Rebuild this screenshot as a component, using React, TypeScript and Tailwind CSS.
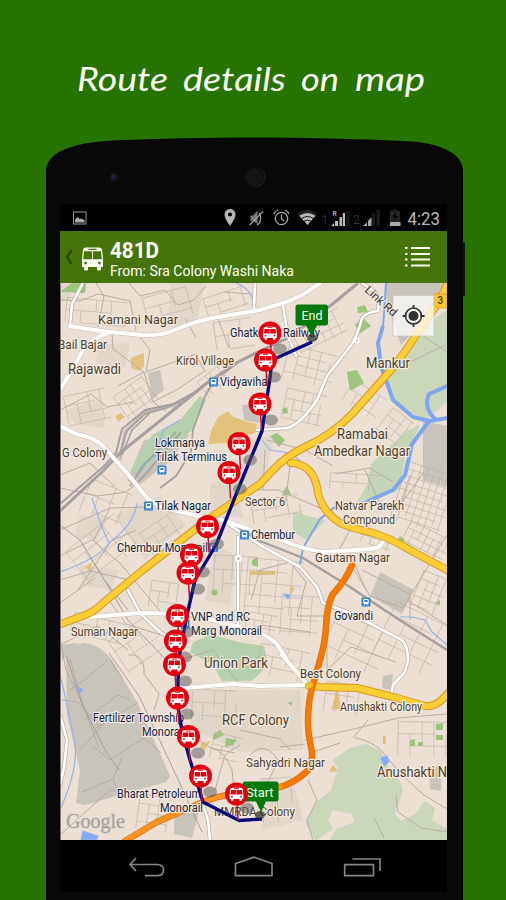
import React from "react";

const STOPS: [number, number, number, number][] = [
  [270, 333, 280, 349], [265.5, 360, 274, 377], [260, 404, 271, 420], [239, 443.5, 250, 460], [229, 472.5, 240, 489],
  [207.5, 526.5, 217, 544], [191.5, 555, 203, 572], [188, 573, 198, 589], [177.5, 615.5, 187, 632], [175.5, 641, 185, 657],
  [174.5, 664.5, 185, 681], [177.5, 698, 187, 714], [188.5, 736.5, 198, 753], [200.5, 776, 210, 792], [236.5, 794, 247, 808],
];

// Neighbourhood street grids: x, y, width, height, rotation, column step, row step.
const GRIDS: number[][] = [
  [118, 384, 36, 28, -36, 7, 8], [398, 468, 52, 60, 18, 7, 7], [404, 530, 46, 22, 26, 7, 7],
  [294, 318, 52, 26, -26, 9, 8], [285, 350, 50, 34, 14, 11, 9], [284, 392, 40, 30, 12, 9, 10],
  [66, 300, 60, 24, 5, 15, 12], [66, 392, 42, 30, -12, 12, 10], [145, 292, 45, 28, -15, 15, 11],
  [205, 292, 42, 20, -18, 13, 9], [215, 320, 38, 28, -8, 13, 14], [72, 528, 62, 42, -38, 15, 12],
  [84, 486, 44, 34, 22, 13, 15], [144, 520, 40, 28, -34, 11, 9], [150, 582, 28, 26, 8, 9, 10],
  [214, 556, 42, 38, 3, 9, 14], [246, 560, 55, 54, 5, 15, 12], [246, 614, 30, 22, 10, 8, 7],
  [252, 498, 48, 22, -10, 12, 9], [281, 596, 38, 40, 4, 10, 12], [72, 618, 52, 20, 14, 12, 10],
  [115, 626, 44, 38, -34, 15, 12], [192, 690, 44, 32, 3, 11, 13], [258, 648, 50, 30, 12, 14, 11],
  [327, 622, 60, 44, 25, 16, 12], [325, 684, 40, 30, 8, 11, 12],
  [398, 722, 50, 34, 1, 12, 12], [382, 612, 60, 55, 26, 17, 14], [380, 412, 26, 34, 38, 8, 9],
  [345, 388, 38, 24, 32, 10, 10], [138, 796, 30, 34, 8, 10, 9], [262, 778, 30, 44, -4, 15, 17],
  [330, 474, 50, 16, 4, 13, 9], [200, 370, 32, 20, -38, 5, 12], [416, 574, 28, 38, 22, 8, 9],
  [212, 735, 28, 26, 14, 10, 12], [362, 532, 30, 14, 18, 9, 7],
];

const gridPath = (g: number[]) => {
  const [, , w, h, , sx, sy] = g;
  let d = "";
  for (let x = 0, i = 0; x <= w; x += sx, i++) d += `M${x} ${i % 3 === 1 ? sy : 0}V${i % 4 === 2 ? h - sy : h}`;
  for (let y = 0, i = 0; y <= h; y += sy, i++) d += `M${i % 3 === 2 ? sx : 0} ${y}H${i % 3 === 1 ? w - sx : w}`;
  return d;
};

type L = [string, number, number, number, number, string?];
const PLACE = "#4d3f2c";
const STATION = "#14233f";
const LABELS: L[] = [
  ["Kamani Nagar", 98, 324, 80, 13.5], ["Bail Bajar", 58, 349, 49, 13], ["Rajawadi", 68, 374, 53, 14],
  ["Kirol Village", 176, 365, 58, 12], ["G Colony", 62, 457, 45, 12.5], ["Mankur", 366, 368, 44, 14],
  ["Ramabai", 337, 439, 51, 14], ["Ambedkar Nagar", 314, 456, 96, 14], ["Sector 6", 245, 506, 40, 12],
  ["Natvar Parekh", 335, 510, 69, 12], ["Compound", 343, 524, 52, 12], ["Gautam Nagar", 315, 562, 75, 13],
  ["Suman Nagar", 71, 636, 67, 12.5], ["Union Park", 204, 668, 64, 14], ["Best Colony", 300, 678, 61, 12.5],
  ["Anushakti Colony", 340, 711, 82, 12], ["RCF Colony", 222, 725, 67, 14], ["Sahyadri Nagar", 246, 767, 79, 12.5],
  ["Anushakti N", 377, 777, 70, 14], ["MMRDA Colony", 214, 816, 81, 12.5],
  ["Ghatkopar Railway", 230, 337, 90, 12, STATION], ["Vidyavihar", 220, 386, 51, 12.5, STATION],
  ["Lokmanya", 155, 447, 50, 12.5, STATION], ["Tilak Terminus", 155, 461, 72, 12.5, STATION],
  ["Tilak Nagar", 155, 510, 56, 12.5, STATION], ["Chembur", 251, 539, 44, 12.5, STATION],
  ["Chembur Monorail", 117, 552, 91, 12.5, STATION], ["Govandi", 334, 620, 39, 12.5, STATION],
  ["VNP and RC", 191, 621, 59, 12.5, STATION], ["Marg Monorail", 191, 635, 71, 12.5, STATION],
  ["Fertilizer Township", 93, 722, 91, 12.5, STATION], ["Monorail", 142, 736, 43, 12.5, STATION],
  ["Bharat Petroleum", 117, 798, 84, 12.5, STATION], ["Monorail", 160, 812, 43, 12.5, STATION],
];

const WHITE = [
  "M70 326Q92 330 110 332L142 335Q160 336 172 331Q198 320 218 317L260 310L283 303Q300 298 314 287L320 283",
  "M110 332Q92 338 83 350L73 368L60 390",
  "M60 426L76 434Q94 437 103 446L127 473L147 498L160 507L203 517L222 520L260 533L282 540Q304 550 325 552L370 549Q379 549 383 542",
  "M286 658L276 643Q264 633 250 630L190 614L140 613L90 617",
  "M183 688L233 684L260 686L308 685L282 655",
];
const WHITE_THIN = [
  "M70 326L72 304L83 283", "M255 283L254 310", "M283 306L288 336L296 356",
  "M257 430L287 428Q300 425 317 400L327 376L352 344Q358 334 362 318Q367 312 378 311Q380 302 375 292L362 283",
  "M260 545L300 567L317 587L323 603L350 613L377 627L402 640Q408 646 408 660L405 672L393 685L391 697",
  "M238 537L238 627", "M222 520L260 545", "M128 590L140 613L160 632L176 642",
  "M202 802L208 820L210 840", "M60 715L67 740L64 768L60 785",
];
const MINOR =
  "M60 300L80 301L98 294L130 301M96 283L104 296L98 327M130 301L136 330M129 283L140 296L165 290L178 305L194 300L206 286M140 337L150 350L146 372L196 354L204 370M112 334L113 349L144 372L153 402L166 411M144 372L118 386M153 402L178 389L206 370M224 292L250 294M185 318L196 338M217 316L229 348M60 410L91 394L107 407L133 402M60 475L90 463L115 487M60 488L98 496L126 492L150 472M60 530L110 508L150 507M60 556L92 540L120 563L144 592L174 628M110 508L94 540M60 580L90 571L130 580M78 590L111 541L136 530M60 603L95 578M109 600L126 624L177 640M60 645L98 626L128 650M128 655Q145 653 144 674L159 694L154 710M180 660L213 650L240 685M260 625L310 632M251 600L260 570L290 562L306 582L297 616L324 616M327 620L327 670L351 647L396 662M353 568L370 596L403 608L439 548M439 548L447 535M350 553L366 590M362 570L410 594L410 620M350 530L338 552M365 470L382 508L402 503L424 472M335 474L370 468L393 482M305 740L358 728L398 718L447 714M355 738Q370 740 382 751L401 774L424 795L447 809M353 738L368 720M310 753L340 743M308 780L317 800L307 820L313 840M396 795L398 812L421 828L447 832M374 818L384 838M190 735L211 748Q224 750 232 770L234 790M210 748L235 753M250 755Q265 740 278 760L268 782M280 747L305 744M240 730L280 739L290 750M60 835L110 790L135 795M215 790L225 755L240 745M267 440L305 450L333 466M410 475L398 512M265 450L263 490M290 466L285 505M242 490L278 490L320 508M60 638L66 670L82 702M62 700L78 702L100 728M407 600L447 625M390 372L445 345M400 320L447 352";

function Bus({ x, y, s = 1, sy = s, color = "#fff", hole = "#e3000f" }: { x: number; y: number; s?: number; sy?: number; color?: string; hole?: string }) {
  return (
    <g transform={`translate(${x} ${y}) scale(${s} ${sy})`}>
      <path fill={color} d="M-6.5-4.6Q-6.3-6.5-4-6.5H4Q6.3-6.5 6.5-4.6L7 1V5H-7V1ZM-5.6 5H-3V6.7Q-4.3 7.4-5.6 6.7ZM3 5H5.6V6.7Q4.3 7.4 3 6.7Z" />
      <path fill={hole} d="M-5.6-4.200H-.3V.4H-6.200ZM.3-4.200H5.600L6.200 .4H.3ZM-2.7-5.800H2.7V-5H-2.7Z" />
      <circle cx="-4.6" cy="2.6" r=".9" fill={hole} /><circle cx="4.6" cy="2.6" r=".9" fill={hole} />
    </g>
  );
}

function StationIcon({ x, y }: { x: number; y: number }) {
  return (
    <g transform={`translate(${x} ${y})`}>
      <rect x="-4.5" y="-4.5" width="9" height="9" rx="1" fill="#3484cf" />
      <rect x="-2.7" y="-3" width="5.4" height="5" rx="1" fill="#fff" />
      <path fill="#3484cf" d="M-1.7-2h3.4v2h-3.4z" /><path stroke="#fff" strokeWidth=".8" d="M-2 3.4L-1 2M2 3.4L1 2" />
    </g>
  );
}

function CityMap() {
  const route = "M312 342L272 360L270 378L262 431L239 487L216 545L195 580L187 615L180 652L178 680L178 707L182 731L190 760L203 802L239 820.5L262 819";
  const orangeTop = "M352 565Q346 580 333 594Q327 604 326 627Q325 643 320 660L313 685Q308 700 308 722Q308 735 312 752Q313 767 305 773Q294 783 280 787";
  const orangeLow = "M280 787L227 795Q215 797 203 802L157 822Q142 831 125 841";
  return (
    <svg className="block h-[557px] w-[387px]" viewBox="60 283 387 557" fill="none" style={{ fontFamily: "Roboto, sans-serif" }}>
      <rect x="60" y="283" width="387" height="557" fill="#ecdfd4" />
      <g fill="#e0d6c9">
        <path d="M170 283L205 283L196 325L168 326ZM115 515L160 495L186 525L145 560ZM65 410L100 400L105 428L75 424ZM190 690L300 690L303 750L240 752L191 728ZM262 777L295 790L303 820L262 830ZM60 283H73L70 300H60ZM250 440L275 435L262 490L235 492ZM100 345L130 343L125 368L95 363ZM210 485L235 475L243 518L210 512ZM215 545L235 555L230 605L205 600ZM80 565L120 570L110 590L82 585ZM80 515L108 518L96 540L75 537Z" />
      </g>
      <g fill="#c9c4bb">
        <path d="M66 657Q72 644 84 643Q99 644 112 660L137 702L170 776L166 782L85 805L76 803L80 770L67 715Z" />
        <path d="M370 596L380 572L414 590L402 614ZM385 283H447L430 314L401 345L388 308ZM423 421L447 426V487L423 480ZM148 373L160 370L164 390L152 399ZM242 405L260 404V423L244 420ZM429 770L441 764V791L430 789ZM144 440L190 434L170 461L137 487L127 480Z" />
        <path d="M60 645L78 643L70 654L62 660ZM175 805L200 808L192 838L174 834ZM383 676L393 674L391 690L382 688Z" />
      </g>
      <g fill="#cad8b9">
        <path d="M447 310L420 328L391 367Q384 385 396 406L426 420L447 402Z" />
        <path d="M371 464L408 430L420 425L405 455L400 490L355 505L367 485ZM293 512L325 520L320 526L307 540L293 532Z" fill="#c5d6b8" />
        <path d="M305 822L316 802L331 790L338 768L333 760L350 748L366 744L381 751L389 770L400 781L403 791L395 814L401 821L415 814L425 801L435 808L432 820L447 829V840H315Z" />
      </g>
      <path fill="#ecdfd4" d="M317 840L333 829L328 820L333 810L352 814L354 822L336 829L330 840Z" />
      <path fill="#b5d0ac" d="M200 396L206 400L193 430L178 440L137 474L131 470L152 435L180 420ZM193 642L211 635L243 643L264 646L268 665L252 681L222 681L213 665L190 652Z" />
      <g fill="#9dc57b">
        <path d="M347 372L357 370L364 383L350 391ZM355 325L362 317L371 326L359 334ZM357 307L365 305L368 312L358 313ZM270 436L277 433L285 440L279 447ZM284 490L287 486L291 494L282 496ZM436 724L443 723V730H436ZM436 735H443V740H436ZM410 740L415 739V746H410ZM418 742H423V746H418ZM252 560L258 557V567L252 565ZM400 536L405 540L402 543L397 541ZM435 603L440 600V605ZM213 735L220 730L224 735L213 740ZM226 738L237 740L232 745L225 747ZM288 703L292 701V706ZM60 292L72 283H86L85 293ZM282 409L287 407L288 413L283 414Z" />
        <circle cx="214.500" cy="592.500" r="3" />
      </g>
      <g fill="#e3c37b">
        <path d="M131 358L144 353V366L139 371L131 368ZM115 416L121 413L125 417L118 422ZM211 431L218 417L228 411L232 416L244 421L257 424L255 433L236 438L226 443L208 444ZM85 567L92 562L91 572ZM201 743L211 741L204 750L200 748ZM250 571L275 571V575H250ZM338 690L341 709L331 710L334 700L336 689ZM333 765L338 771L329 772ZM383 736H386V744H383ZM290 586L295 588L291 595Z" />
      </g>
      <g stroke="#b8aea3" strokeWidth=".8">
        {GRIDS.map((g, i) => (
          <path key={i} d={gridPath(g)} transform={`translate(${g[0]} ${g[1]}) rotate(${g[4]} ${g[2] / 2} ${g[3] / 2})`} opacity=".7" />
        ))}
        <path d={MINOR} strokeWidth="1" strokeLinejoin="round" stroke="#b8aea3" />
        <path d="M70 690L87 678L108 660M84 720L118 695L130 700M93 746L110 760L144 738L161 753M80 750L115 712M82 792L113 779L122 800M70 659L82 702L99 748M110 660L122 678M113 779L122 757M96 728L137 703" stroke="#aba69e" />
        <path d="M66 655L82 704L105 750L119 770M109 653L139 696L175 773L202 832" stroke="#99958f" />
      </g>
      <g stroke="#93b3ee" strokeWidth="1.200">
        <path d="M60 572Q100 558 110 542Q134 525 137 503M92 498L101 525L109 543M60 675Q68 707 75 745Q78 770 60 810M236 283Q254 290 253 306M262 440L270 450L290 453L307 466M136 475L142 465L156 455L163 430L180 420M400 617H412L425 620L432 632L447 645" />
        <path fill="#83a9ee" d="M83 831L98 836L96 840H81ZM381 758L387 756L389 762L384 766ZM284 594L290 595L288 599ZM78 687L83 690L80 693Z" />
      </g>
      <path d="M386 283L385 299L383 326M368 501L349 507L335 507L320 519L303 548L300 564" stroke="#7fa6ef" strokeWidth="2" />
      <path d="M383 326L378 343L381 366L393 400L413 417L430 421L447 418M447 386L429 394Q423 408 436 420M429 421L412 444L405 475L393 490L368 501" stroke="#7fa6ef" strokeWidth="4" strokeLinejoin="round" />
      <g stroke="#a5a0a1" strokeLinejoin="round">
        <path d="M60 511L103 471L120 453L207 383L238 362L260 351L290 337L335 302L358 283" strokeWidth="3" />
        <path d="M60 504L103 467L116 453L122 429L145 410L178 403L203 387" strokeWidth="2" />
        <path d="M119 456L127 431L145 414L166 408L202 388M122 455L132 430L151 412M191 452L193 430L205 396L215 380L240 361M191 452L176 476L160 488M176 432L145 464L130 486M181 432L149 470L138 482" strokeWidth="1.700" />
        <path d="M223 518L260 541L303 558L350 587L398 619L447 650" strokeWidth="2.400" />
        <path d="M60 525L80 540L105 581L128 620L168 662M105 581L128 610" strokeWidth="1" />
        <path d="M120 460L125 432L145 412L176 405" strokeWidth="3" opacity=".6" />
      </g>
      <g strokeLinejoin="round" strokeLinecap="round">
        {WHITE.map((d) => <path key={d} d={d} stroke="#c9c0b6" strokeWidth="5" />)}
        {WHITE_THIN.map((d) => <path key={d} d={d} stroke="#b9b1a8" strokeWidth="4" />)}
        {WHITE.map((d) => <path key={d + "f"} d={d} stroke="#fff" strokeWidth="4" />)}
        {WHITE_THIN.map((d) => <path key={d + "f"} d={d} stroke="#fff" strokeWidth="2.600" />)}
        <circle cx="238.500" cy="558.500" r="2.500" stroke="#fff" strokeWidth="2" fill="#c9c0b6" />
        <circle cx="357" cy="340.500" r="2" stroke="#fff" strokeWidth="1.500" fill="#c9c0b6" />
        {[
          "M449 280Q441 300 430 315L397 363L353 413Q333 434 307 446Q286 456 273 470L260 484L207 520L143 570L103 603Q93 613 80 617L58 625",
          "M291 463Q312 464 317 487Q319 509 340 523Q350 528 370 532Q388 537 410 550L449 571",
          "M309 686L320 687L357 688L397 698L425 706Q437 708 449 692",
        ].map((d) => (
          <g key={d}><path d={d} stroke="#d79b25" strokeWidth="8" /><path d={d} stroke="#fdce35" strokeWidth="6" /></g>
        ))}
        <path d={orangeLow} stroke="#d9701a" strokeWidth="6.500" />
        <path d={orangeTop} stroke="#d9701a" strokeWidth="6.500" />
        <path d={orangeTop} stroke="#f87900" strokeWidth="5.200" />
        <path d={orangeLow} stroke="#fb9320" strokeWidth="5" />
        <circle cx="310" cy="685" r="3" fill="#fdbd28" />
      </g>
      <StationIcon x={213.500} y={382} /><StationIcon x={162} y={470} /><StationIcon x={148.500} y={506} />
      <StationIcon x={244.500} y={535} /><StationIcon x={366} y={602} /><StationIcon x={213.500} y={547.500} /><StationIcon x={185} y={624} />
      <g stroke="#f3ebe1" strokeWidth="2.400" strokeLinejoin="round">
        {LABELS.map(([t, x, y, w, s, c]) => (
          <text key={t + y} x={x} y={y} fontSize={s} textLength={w} lengthAdjust="spacingAndGlyphs" fill={c ?? PLACE} style={{ paintOrder: "stroke" }}>{t}</text>
        ))}
      </g>
      <text x="66" y="828" fontSize="22" textLength="59" lengthAdjust="spacingAndGlyphs" fill="#a5a29d" stroke="#dad7d1" strokeWidth="1.500" style={{ fontFamily: "'Liberation Serif', serif", paintOrder: "stroke" }}>Google</text>
      <path d={route} stroke="#08087f" strokeWidth="3.400" strokeLinejoin="round" />
      {STOPS.map(([x, y, sx, sy], i) => (
        <g key={i}>
          <ellipse cx={sx} cy={sy} rx="7" ry="5.500" fill="#555" opacity=".48" />
          <path d={`M${x + 0.5} ${y + 8}L${x + 1.5} ${y + 26}`} stroke="#d20b26" strokeWidth="1.500" />
        </g>
      ))}
      {STOPS.slice(0, 14).map(([x, y], i) => (
        <g key={i}>
          <circle cx={x} cy={y} r="11.500" fill="#e3000f" />
          <Bus x={x} y={y} s={0.98} />
        </g>
      ))}
      <ellipse cx="312" cy="338" rx="5" ry="4" fill="#333" opacity=".75" />
      <ellipse cx="260" cy="815" rx="5" ry="4" fill="#333" opacity=".75" />
      <path fill="#05790b" d="M298 304.500H325.500Q328 304.500 328 307V323Q328 325.500 325.500 325.500H317L311.500 336L306 325.500H298Q295.500 325.500 295.500 323V307Q295.500 304.500 298 304.500Z" />
      <path fill="#05790b" d="M245 781.500H276Q278.500 781.500 278.500 784V799Q278.500 801.500 276 801.500H266L261 812L256 801.500H245Q242.500 801.500 242.500 799V784Q242.500 781.500 245 781.500Z" />
      <text x="301.500" y="319.500" fontSize="13.500" textLength="21" lengthAdjust="spacingAndGlyphs" fill="#f3faed">End</text>
      <text x="246" y="796.500" fontSize="13.500" textLength="27.500" lengthAdjust="spacingAndGlyphs" fill="#f3faed">Start</text>
      <circle cx="236.500" cy="794" r="11.500" fill="#e3000f" /><Bus x={236.500} y={794} s={0.98} />
      <path fill="#fbc52c" stroke="#d89e28" strokeWidth=".8" d="M434 294H447V308H438Q434 307 434 302Z" />
      <text x="437.500" y="304" fontSize="10" fontWeight="500" fill="#4a3b12">3</text>
      <rect x="393" y="295.500" width="41" height="40.500" fill="#fff" fillOpacity=".72" stroke="#c9c7c2" strokeWidth=".8" />
      <text transform="translate(364 291) rotate(42)" fontSize="11.500" textLength="39" lengthAdjust="spacingAndGlyphs" fill="#3b3935" stroke="#f3ebe1" strokeWidth="1.500" style={{ paintOrder: "stroke" }}>Link Rd</text>
      <circle cx="413.500" cy="316" r="8" stroke="#333" strokeWidth="1.600" /><circle cx="413.500" cy="316" r="5" fill="#333" />
      <path d="M413.500 305V309M413.500 323V327M402.500 316H406.500M420.500 316H424.500" stroke="#333" strokeWidth="1.800" />
      <path d="M60.500 283V840" stroke="#7c7b77" />
    </svg>
  );
}

function StatusBar() {
  return (
    <div className="h-[27px] w-[387px] bg-black">
      <svg className="block h-[27px] w-[387px]" viewBox="60 204 387 27" fill="none" style={{ fontFamily: "Roboto, sans-serif" }}>
        <rect x="73.500" y="212" width="12.500" height="12" stroke="#999" />
        <path fill="#aaa" d="M75 222.500V219.500L77.500 217L79.500 219L81 218.500L84.500 220V222.500Z" />
        <path fill="#b5b5b5" fillRule="evenodd" d="M230 209Q235.500 209.500 235.500 215Q235.500 218 230 226Q224.500 218 224.500 215Q224.500 209.500 230 209ZM230 212.500A2 2 0 1 0 230 216.600A2 2 0 1 0 230 212.500Z" />
        <path fill="#777" d="M250.500 215.500H253L257.500 210.500V224L253 221H250.500Z" />
        <path stroke="#aaa" strokeWidth="1.200" d="M249.500 225L263 211.500M259 213Q262 217 259.500 223L257 225" />
        <circle cx="281.500" cy="218.500" r="6.200" stroke="#aaa" strokeWidth="1.300" />
        <path stroke="#aaa" strokeWidth="1.300" d="M281.500 214.500V218.800L284 221M274 214Q275 211 278 210M289 214Q288 211 285 210" />
        <path fill="#222" d="M307.500 225L297.500 214Q307.500 206 317.500 214Z" />
        <path fill="#b5b5b5" d="M307.500 225L299.200 215.800Q307.500 210 315.500 215.800Z" />
        <path stroke="#050505" strokeWidth=".9" d="M301.500 218.500Q307.500 214.500 313.500 218.500M304 221.200Q307.500 219 311 221.200" />
        <text x="321.500" y="223.500" fontSize="12" fill="#333">1</text>
        <text x="332.500" y="216" fontSize="6.500" fontWeight="700" fill="#aaa">R</text>
        <path fill="#bbb" d="M331 226L334 223V226ZM335 221H338V226H335ZM339.500 217H342V226H339.500ZM342.800 213H345V226H342.800Z" />
        <path fill="#181818" d="M346 212L349.500 210V226H346ZM372 213H375V226H372ZM376.500 210H380V226H376.500Z" />
        <text x="353" y="223.500" fontSize="12" fill="#333">2</text>
        <path fill="#aaa" d="M363 226L367 222.500V226ZM368 221L371.500 217V226H368Z" />
        <path fill="#242424" d="M390 211H393V209.500H397V211H400V222H390Z" /><path fill="#060606" d="M396 212L392 217H395L394 221L398 216H395.500Z" />
        <path fill="#aaa" d="M390 222H400.500V226H390Z" />
        <text x="407.500" y="224.500" fontSize="17.500" textLength="32.500" lengthAdjust="spacingAndGlyphs" fill="#b7b7b7">4:23</text>
      </svg>
    </div>
  );
}

export default function App() {
  return (
    <main className="flex h-[900px] w-[506px] flex-col overflow-hidden bg-[#267300]">
      <h1 className="h-[137px] w-full">
        <svg className="block h-[137px] w-[506px]" viewBox="0 0 506 137" fontSize="32" fontStyle="italic" fontWeight="400" fill="#fcfff4" style={{ fontFamily: "Lato, 'Open Sans', sans-serif" }}>
          <text x="77" y="90.500" textLength="91" lengthAdjust="spacingAndGlyphs">Route</text>
          <text x="183" y="90.500" textLength="103" lengthAdjust="spacingAndGlyphs">details</text>
          <text x="301" y="90.500" textLength="38" lengthAdjust="spacingAndGlyphs">on</text>
          <text x="355" y="90.500" textLength="70" lengthAdjust="spacingAndGlyphs">map</text>
        </svg>
      </h1>
      <section className="ml-[46px] flex w-[419px] flex-col">
        <svg className="block h-[67px] w-[419px]" viewBox="46 137 419 67" fill="none">
          <path fill="#070807" d="M46 204V170Q47 157 64 149.500Q82 142 112 140.500Q180 137.500 254 137.500Q330 137.500 404 141Q433 142 449 151Q463 159 463 171V204Z" />
          <circle cx="114.500" cy="177.500" r="5" fill="#121315" /><circle cx="113.500" cy="177" r="2.200" fill="#24234d" />
          <circle cx="255" cy="177" r="10.500" fill="#1b1c1b" /><circle cx="254" cy="176.500" r="10" fill="#0b0c0b" /><circle cx="254.500" cy="177" r="8.500" fill="#141514" />
        </svg>
        <div className="flex h-[696px]">
          <div className="w-[14px] bg-[#070807]" />
          <div className="flex w-[387px] flex-col bg-black">
            <StatusBar />
            <header className="flex h-[52px] items-center bg-[#45750a]">
              <svg className="h-[52px] w-[50px] shrink-0" viewBox="60 231 50 52" fill="none">
                <path d="M71.500 250L67 257L71.500 264" stroke="#294d05" strokeWidth="2.600" />
                <Bus x={92.500} y={258.500} s={1.5} sy={1.7} color="#fbfff2" hole="#45750a" />
              </svg>
              <div className="flex h-full flex-1 flex-col pt-[8px]">
                <svg className="block h-[42px] w-[190px]" viewBox="110 239 190 42" fill="#fbfff2" style={{ fontFamily: "Roboto, sans-serif" }}>
                  <text x="110" y="258" fontSize="21.500" fontWeight="700" textLength="49" lengthAdjust="spacingAndGlyphs">481D</text>
                  <text x="110" y="275.500" fontSize="14.500" textLength="184" lengthAdjust="spacingAndGlyphs">From: Sra Colony Washi Naka</text>
                </svg>
              </div>
              <svg className="mr-[17px] h-[22px] w-[26px]" viewBox="403 246 26 22">
                <path stroke="#f7ffe8" strokeWidth="1.800" d="M404 248H406.500M410 248H429M404 254H406.500M410 254H429M404 259.500H406.500M410 259.500H429M404 265.500H406.500M410 265.500H429" />
              </svg>
            </header>
            <CityMap />
            <nav className="h-[52px] bg-black">
              <svg className="block h-[52px] w-[387px]" viewBox="60 840 387 52" fill="none" stroke="#858585" strokeWidth="1.700">
                <path d="M136 858L130 864.500L136 871M130 864.500H157Q163.500 864.500 163.500 870Q163.500 875.700 157 875.700H145" />
                <path d="M235.500 875.700V863.500L254 857.200L272 863.500V875.700Z" />
                <path d="M344.700 864.700H373.500V875.700H344.700ZM352.500 859H380V871" />
              </svg>
            </nav>
            <div className="h-2 bg-[#070807]" />
          </div>
          <div className="w-[16px] bg-[#070807]" />
          <div className="mt-[38px] h-[54px] w-[2px] bg-[#101510]" />
        </div>
      </section>
    </main>
  );
}
